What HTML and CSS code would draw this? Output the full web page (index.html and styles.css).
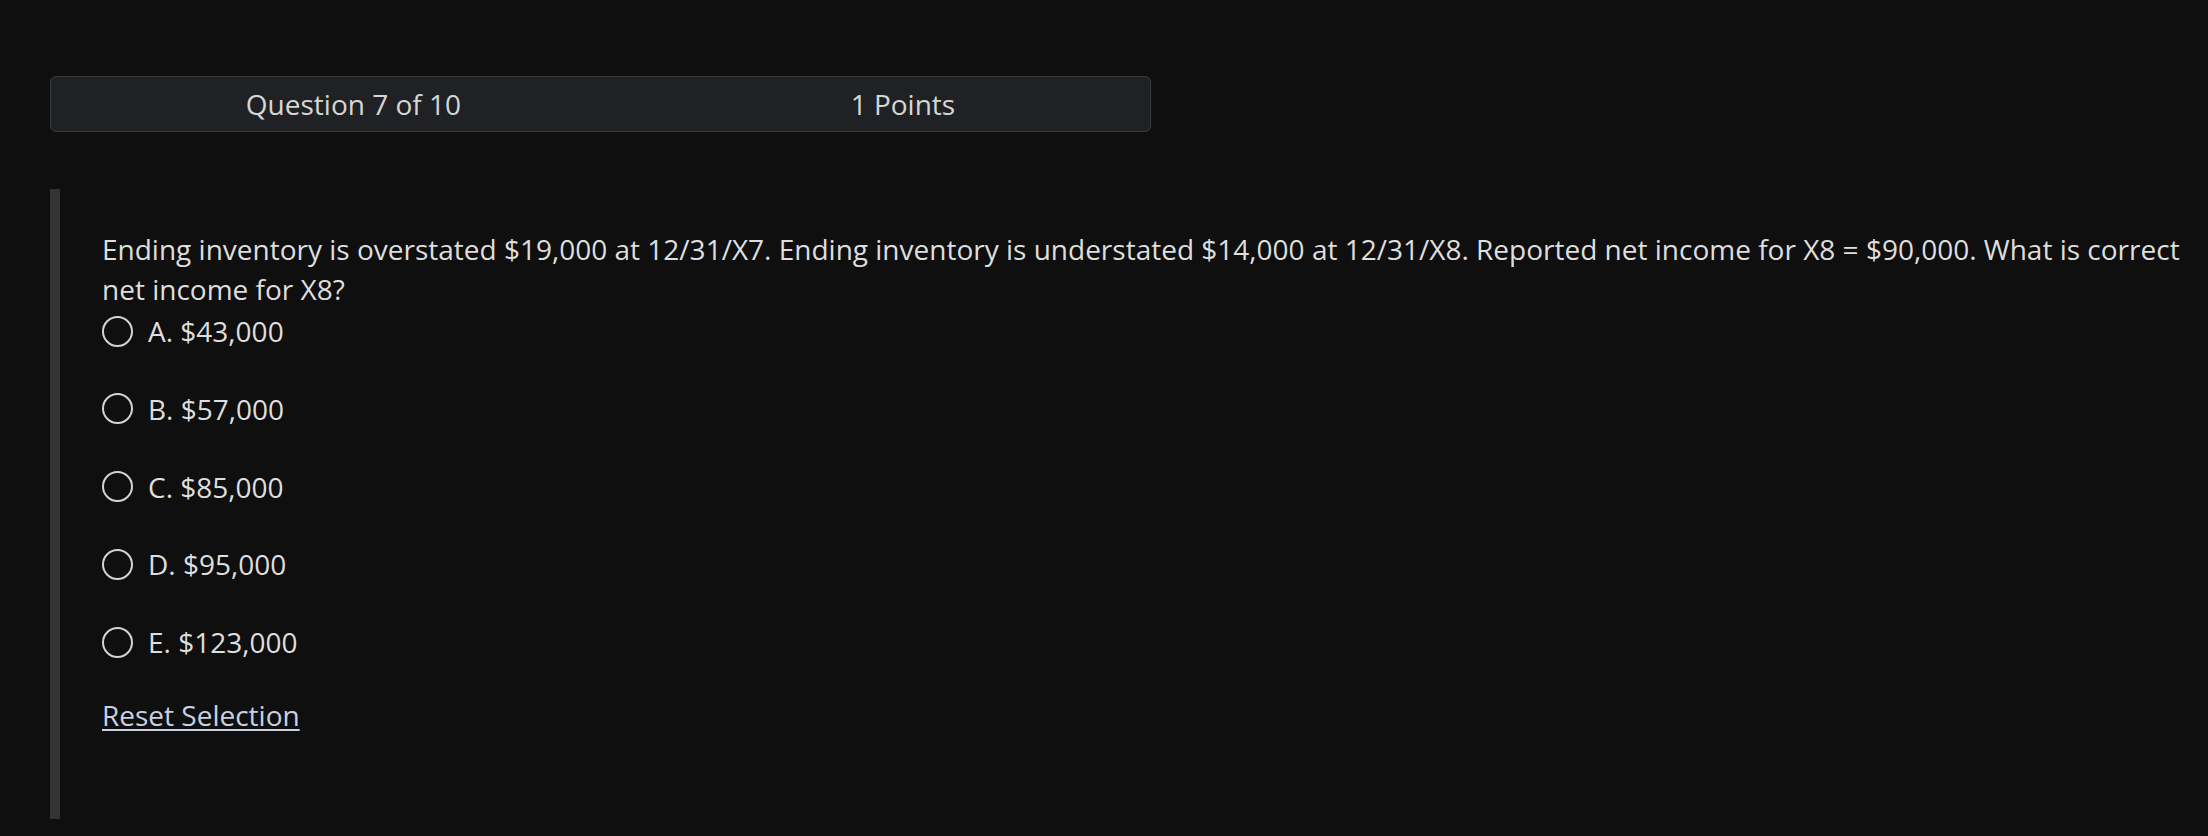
FILE: index.html
```html
<!DOCTYPE html>
<html lang="en">
<head>
<meta charset="utf-8">
<title>Question 7 of 10</title>
<link rel="stylesheet" href="styles.css">
</head>
<body>
<main class="page">
  <header class="quiz-header">
    <span class="quiz-header__item">Question 7 of 10</span>
    <span class="quiz-header__item">1 Points</span>
  </header>
  <section class="question">
    <p class="question__text">Ending inventory is overstated $19,000 at 12/31/X7. Ending inventory is understated $14,000 at 12/31/X8. Reported net income for X8 = $90,000. What is correct net income for X8?</p>
    <div class="options">
      <label class="option"><span class="option__radio"></span><span class="option__label">A. $43,000</span></label>
      <label class="option"><span class="option__radio"></span><span class="option__label">B. $57,000</span></label>
      <label class="option"><span class="option__radio"></span><span class="option__label">C. $85,000</span></label>
      <label class="option"><span class="option__radio"></span><span class="option__label">D. $95,000</span></label>
      <label class="option"><span class="option__radio"></span><span class="option__label">E. $123,000</span></label>
    </div>
    <a class="reset" href="#">Reset Selection</a>
  </section>
</main>
</body>
</html>
```
FILE: styles.css
```css
html, body {
  margin: 0;
  padding: 0;
  background: #0f0f0f;
}

body {
  font-family: "Open Sans", "Noto Sans", sans-serif;
  font-size: 28px;
  line-height: 40px;
  color: #dedede;
}

.page {
  padding: 76px 0 0 50px;
}

.quiz-header {
  width: 1101px;
  box-sizing: border-box;
  display: flex;
  justify-content: space-around;
  padding: 7px 0;
  background: #202124;
  border: 1px solid #3a3b3e;
  border-radius: 6px;
  color: #d6d6d6;
}

.question {
  margin-top: 57px;
  border-left: 10px solid #333436;
  padding: 40px 8px 84px 42px;
}

.question__text {
  margin: 0 0 2px 0;
}

.options {
  display: flex;
  flex-direction: column;
  gap: 37.75px;
}

.option {
  display: flex;
  align-items: center;
  gap: 15px;
  height: 40px;
}

.option__radio {
  width: 31px;
  height: 31px;
  box-sizing: border-box;
  border: 2px solid #d4d4d4;
  border-radius: 50%;
  flex: none;
}

.reset {
  display: inline-block;
  margin-top: 33px;
  color: #c8d0e2;
  text-decoration: underline;
  text-decoration-thickness: 2px;
  text-underline-offset: 3px;
}
```
